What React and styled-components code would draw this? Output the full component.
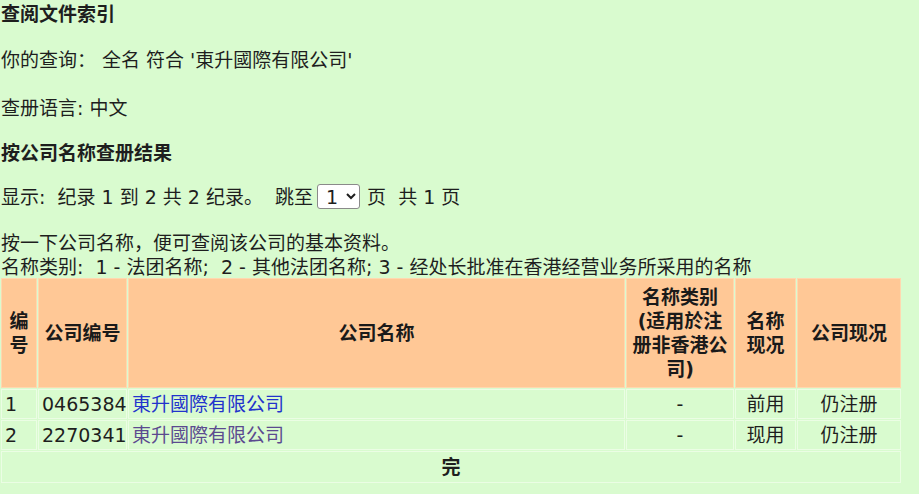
import styled, { createGlobalStyle } from 'styled-components'

const GlobalStyle = createGlobalStyle`
  html, body {
    margin: 0;
    padding: 0;
    background: #d9fbcf;
  }
  body {
    font-family: "DejaVu Sans", "Noto Sans CJK SC", sans-serif;
    font-size: 19px;
    line-height: 24px;
    color: #1e1e1e;
  }
`;

const Page = styled.div`
  padding: 2px 0 0 1px;
`;

const Block = styled.div`
  margin-bottom: ${props => props.gap ?? 22}px;
  font-weight: ${props => (props.bold ? 700 : 400)};
  display: flex;
  align-items: center;
  white-space: pre;
`;

const Lines = styled.div`
  margin-bottom: -2px;
  white-space: pre;
`;

const PageSelect = styled.select`
  font: inherit;
  font-size: 19px;
  width: 43px;
  height: 25px;
  margin: 0 7px 0 4px;
  padding: 0 0 0 4px;
  border: 1px solid #8a8a8a;
  border-radius: 3px;
  background: #fff;
  color: #1e1e1e;
`;

const Results = styled.table`
  width: 902px;
  table-layout: fixed;
  border-collapse: separate;
  border-spacing: 1px;
  margin-left: -1px;
`;

const HeadCell = styled.th`
  background: #ffc896;
  border: 1px solid #ffd8b0;
  padding: 6px 2px;
  font-weight: 700;
  text-align: center;
  vertical-align: middle;
  color: #1a1a1a;
`;

const Cell = styled.td`
  background: #d9fbcf;
  border: 1px solid #ebfde4;
  padding: 2px 3px;
  text-align: ${props => props.align || 'left'};
  white-space: nowrap;
`;

const FootCell = styled(Cell)`
  font-weight: 700;
  text-align: center;
  padding: 3px 3px;
`;

const NameLink = styled.a`
  color: ${props => (props.visited ? '#5b4a8f' : '#2233cc')};
  text-decoration: none;
`;

const rows = [
  { no: 1, code: '0465384', name: '東升國際有限公司', type: '-', nameStatus: '前用', status: '仍注册', visited: false },
  { no: 2, code: '2270341', name: '東升國際有限公司', type: '-', nameStatus: '现用', status: '仍注册', visited: true },
];

export default function App() {
  return (
    <Page>
      <GlobalStyle />
      <Block bold gap={22}>查阅文件索引</Block>
      <Block gap={24}>你的查询： 全名 符合 '東升國際有限公司'</Block>
      <Block gap={21}>查册语言: 中文</Block>
      <Block bold gap={19}>按公司名称查册结果</Block>
      <Block gap={22}>
        显示:  纪录 1 到 2 共 2 纪录。  跳至
        <PageSelect defaultValue="1">
          <option value="1">1</option>
        </PageSelect>
        页  共 1 页
      </Block>
      <Lines>
        <div>按一下公司名称，便可查阅该公司的基本资料。</div>
        <div>名称类别:  1 - 法团名称;  2 - 其他法团名称; 3 - 经处长批准在香港经营业务所采用的名称</div>
      </Lines>
      <Results>
        <colgroup>
          <col style={{ width: 36 }} />
          <col style={{ width: 89 }} />
          <col style={{ width: 497 }} />
          <col style={{ width: 108 }} />
          <col style={{ width: 61 }} />
          <col style={{ width: 104 }} />
        </colgroup>
        <thead>
          <tr>
            <HeadCell>编<br />号</HeadCell>
            <HeadCell>公司编号</HeadCell>
            <HeadCell>公司名称</HeadCell>
            <HeadCell>名称类别<br />(适用於注<br />册非香港公<br />司)</HeadCell>
            <HeadCell>名称<br />现况</HeadCell>
            <HeadCell>公司现况</HeadCell>
          </tr>
        </thead>
        <tbody>
          {rows.map(r => (
            <tr key={r.no}>
              <Cell>{r.no}</Cell>
              <Cell>{r.code}</Cell>
              <Cell>
                <NameLink href="#" visited={r.visited ? 1 : 0}>{r.name}</NameLink>
              </Cell>
              <Cell align="center">{r.type}</Cell>
              <Cell align="center">{r.nameStatus}</Cell>
              <Cell align="center">{r.status}</Cell>
            </tr>
          ))}
          <tr>
            <FootCell colSpan={6}>完</FootCell>
          </tr>
        </tbody>
      </Results>
    </Page>
  );
}
